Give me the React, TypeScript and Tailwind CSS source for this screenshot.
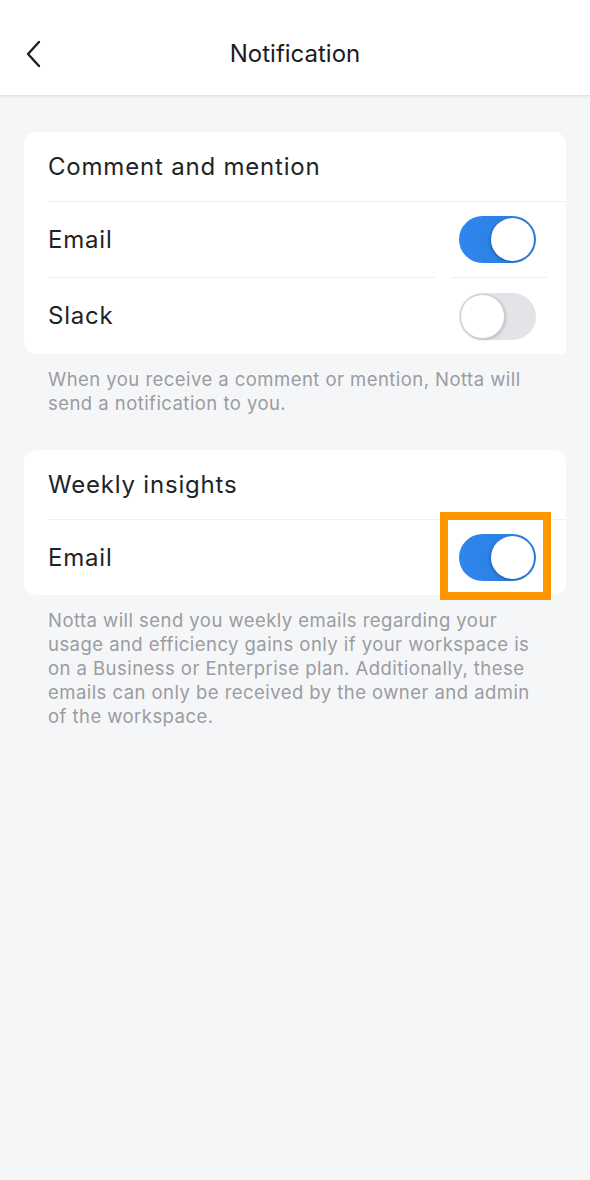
import React from 'react'

const FONT = { fontFamily: 'Inter, "Noto Sans", sans-serif' }

function Toggle({ on }: { on: boolean }) {
  return on ? (
    <div className="relative w-[77px] h-[47px] rounded-full bg-gradient-to-r from-[#2f86ec] to-[#2a7de2]">
      <div className="absolute right-[2px] top-[2px] w-[43px] h-[43px] rounded-full bg-white shadow-[-1px_1px_3px_rgba(0,0,0,0.25)]" />
    </div>
  ) : (
    <div className="relative w-[77px] h-[47px] rounded-full bg-[#e3e4e7]">
      <div className="absolute left-[1px] top-[1px] w-[45px] h-[45px] rounded-full bg-white border border-[#cfd0d3] shadow-[1px_1px_3px_rgba(0,0,0,0.18)]" />
    </div>
  )
}

function Row({ label, on, divider, highlight }: { label: string; on: boolean; divider?: boolean; highlight?: boolean }) {
  return (
    <div className="flex h-[76px] pl-6">
      <div className={`flex-1 flex items-center text-[24px] tracking-[0.8px] text-[#222326] ${divider ? 'border-b border-[#eeeff1]' : ''}`}>
        {label}
      </div>
      <div className="w-[131px] flex flex-col">
        <div className={`flex-1 ml-4 mr-[19px] pl-2 flex items-center ${divider ? 'border-b border-[#eeeff1]' : ''}`}>
          <div className="relative">
            <Toggle on={on} />
            {highlight && (
              <div className="absolute left-[-19px] top-[-22px] w-[111px] h-[88px] border-[8px] border-[#ff9500]" />
            )}
          </div>
        </div>
      </div>
    </div>
  )
}

export default function App() {
  return (
    <div className="min-h-[1180px] bg-[#f5f6f8]" style={FONT}>
      {/* Header */}
      <header className="relative h-[96px] bg-white flex items-center justify-center border-b border-[#e2e3e5] shadow-[0_1px_2px_rgba(0,0,0,0.06)]">
        <svg className="absolute left-[22px] top-[40px]" width="22" height="28" viewBox="0 0 22 28" fill="none">
          <path d="M17 2 L6 14 L17 26" stroke="#1f1f22" strokeWidth="2.4" strokeLinecap="round" strokeLinejoin="round" />
        </svg>
        <h1 className="text-[24px] text-[#1c1c1f] tracking-[0px] pt-[12px]">Notification</h1>
      </header>

      <div className="px-6 pt-9">
        {/* Comment and mention */}
        <div className="bg-white rounded-[12px] rounded-br-none overflow-hidden">
          <div className="ml-6 h-[70px] flex items-center border-b border-[#eeeff1] text-[24px] tracking-[0.8px] text-[#222326]">
            Comment and mention
          </div>
          <Row label="Email" on divider />
          <Row label="Slack" on={false} />
        </div>
        <p className="px-6 pt-[13px] text-[18.5px] leading-[24px] tracking-[0.45px] text-[#9b9ca0]">
          When you receive a comment or mention, Notta will send a notification to you.
        </p>

        {/* Weekly insights */}
        <div className="mt-[35px] bg-white rounded-[12px]">
          <div className="ml-6 h-[70px] flex items-center border-b border-[#eeeff1] text-[24px] tracking-[0.8px] text-[#222326]">
            Weekly insights
          </div>
          <div className="h-[75px] flex flex-col">
            <Row label="Email" on highlight />
          </div>
        </div>
        <p className="px-6 pt-[13px] text-[18.5px] leading-[24px] tracking-[0.45px] text-[#9b9ca0]">
          Notta will send you weekly emails regarding your usage and efficiency gains only if your workspace is on a Business or Enterprise plan. Additionally, these emails can only be received by the owner and admin of the workspace.
        </p>
      </div>
    </div>
  )
}
